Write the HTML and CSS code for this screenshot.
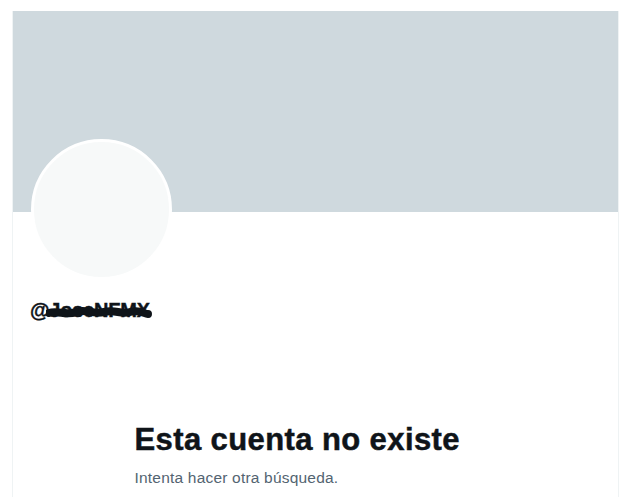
FILE: index.html
```html
<!DOCTYPE html>
<html lang="es">

<head>
    <meta charset="UTF-8">
    <meta name="viewport" content="width=device-width, initial-scale=1.0">
    <title>Perfil</title>
    <link rel="stylesheet" href="styles.css">
</head>

<body>
    <div class="profile-column">
        <div class="banner"></div>

        <div class="profile-head">
            <div class="avatar"></div>
            <div class="handle">
                <span class="handle-text">@JoseNFMX</span>
                <!-- scribble over part of the name -->
                <svg class="scribble" width="106" height="16" viewBox="0 0 106 16">
                    <path d="M3 9 C12 6, 20 12, 30 8 S46 11, 58 8 S74 11, 84 8 S98 10, 102 10" stroke="#0f1419" stroke-width="8" fill="none" stroke-linecap="round"/>
                </svg>
            </div>
        </div>

        <div class="empty-state">
            <h2 class="empty-title">Esta cuenta no existe</h2>
            <p class="empty-sub">Intenta hacer otra búsqueda.</p>
        </div>
    </div>
</body>

</html>
```

FILE: styles.css
```css
body {
    margin: 0;
    background-color: #fff;
    font-family: "Liberation Sans", Arial, sans-serif;
    color: #0f1419;
}

.profile-column {
    margin-top: 11px;
    margin-left: 12px;
    width: 605px;
    min-height: 486px;
    border-left: 1px solid #eff3f4;
    border-right: 1px solid #eff3f4;
}

.banner {
    height: 201px;
    background-color: #cfd9de;
}

.profile-head {
    padding-left: 18px;
}

.avatar {
    width: 135px;
    height: 135px;
    margin-top: -73px;
    border: 3px solid #fff;
    border-radius: 50%;
    background-color: #f7f9f9;
}

.handle {
    position: relative;
    margin-top: 18px;
    height: 24px;
    display: flex;
    align-items: center;
}

.handle-text {
    margin-left: -1px;
    font-size: 20px;
    font-weight: bold;
    letter-spacing: -0.2px;
    -webkit-text-stroke: 0.4px #0f1419;
}

.scribble {
    position: absolute;
    left: 15px;
    top: 6px;
}

.empty-state {
    width: 362px;
    margin: 100px auto 0;
}

.empty-title {
    margin: 0;
    font-size: 31px;
    line-height: 36px;
    font-weight: 800;
    letter-spacing: 0.4px;
    -webkit-text-stroke: 0.5px #0f1419;
}

.empty-sub {
    margin: 10px 0 0;
    font-size: 15.5px;
    line-height: 20px;
    color: #536471;
    letter-spacing: 0.2px;
}
```
